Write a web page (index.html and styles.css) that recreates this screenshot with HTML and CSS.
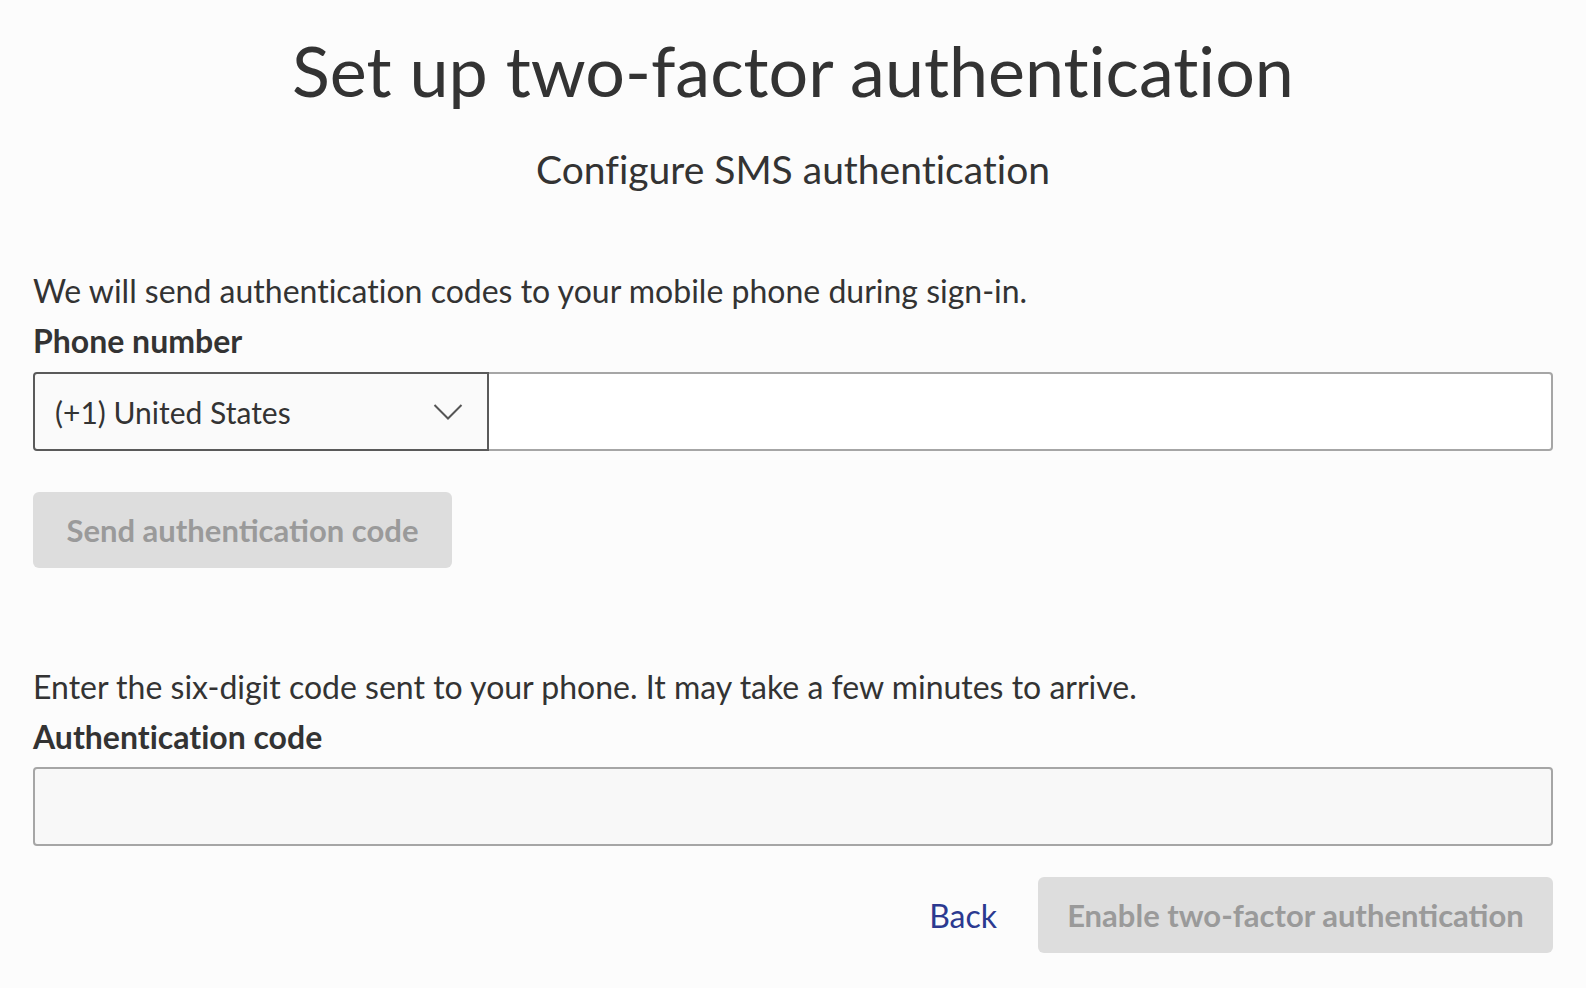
FILE: index.html
```html
<!DOCTYPE html>
<html lang="en">
<head>
<meta charset="utf-8">
<title>Set up two-factor authentication</title>
<link rel="stylesheet" href="styles.css">
</head>
<body>
<main class="page">
  <h1 class="title">Set up two-factor authentication</h1>
  <h2 class="subtitle">Configure SMS authentication</h2>

  <section class="step step-phone">
    <p class="help">We will send authentication codes to your mobile phone during sign-in.</p>
    <label class="label" for="phone">Phone number</label>
    <div class="phone-row">
      <div class="select">
        <span class="select-text">(+1) United States</span>
        <svg class="chevron" width="30" height="18" viewBox="0 0 30 18" aria-hidden="true">
          <path d="M1.5 2 L15 15.5 L28.5 2" fill="none" stroke="#555" stroke-width="2"/>
        </svg>
      </div>
      <input class="phone-input" id="phone" type="tel">
    </div>
    <button class="btn-disabled btn-send" type="button" disabled>Send authentication code</button>
  </section>

  <section class="step step-code">
    <p class="help">Enter the six-digit code sent to your phone. It may take a few minutes to arrive.</p>
    <label class="label" for="code">Authentication code</label>
    <input class="code-input" id="code" type="text">
    <div class="actions">
      <a class="back" href="#">Back</a>
      <button class="btn-disabled btn-enable" type="button" disabled>Enable two-factor authentication</button>
    </div>
  </section>
</main>
</body>
</html>
```

FILE: styles.css
```css
html, body {
  margin: 0;
  padding: 0;
  background: #fcfcfc;
}

body {
  font-family: "Lato", "Noto Sans", sans-serif;
  font-variant-ligatures: none;
  color: #333;
}

.page {
  padding: 35px 33px 0 33px;
}

.title {
  margin: 0;
  font-size: 70px;
  line-height: 70px;
  font-weight: 400;
  text-align: center;
  color: #333;
}

.subtitle {
  margin: 45px 0 0;
  font-size: 39px;
  line-height: 39px;
  font-weight: 400;
  text-align: center;
  color: #333;
}

.step-phone {
  margin-top: 82px;
}

.help {
  margin: 0;
  font-size: 32px;
  line-height: 40px;
}

.label {
  display: block;
  margin-top: 12px;
  font-size: 32px;
  line-height: 36px;
  font-weight: 700;
}

.phone-row {
  display: flex;
  margin-top: 13px;
  height: 79px;
}

.select {
  box-sizing: border-box;
  width: 456px;
  flex: none;
  display: flex;
  align-items: center;
  justify-content: space-between;
  padding: 0 24px 0 20px;
  border: 2px solid #5a5a5a;
  border-radius: 4px 0 0 4px;
  background: #fafafa;
  font-size: 30px;
}

.chevron {
  display: block;
}

.phone-input {
  box-sizing: border-box;
  flex: 1;
  height: 79px;
  margin: 0;
  border: 2px solid #a6a6a6;
  border-left: 0;
  border-radius: 0 4px 4px 0;
  background: #fff;
}

.btn-disabled {
  box-sizing: border-box;
  height: 76px;
  padding: 0;
  border: 0;
  border-radius: 6px;
  background: #dddddd;
  color: #9a9a9a;
  font-family: inherit;
  font-size: 31px;
  font-weight: 700;
}

.btn-send {
  display: block;
  margin-top: 41px;
  width: 419px;
}

.step-code {
  margin-top: 99px;
}

.code-input {
  display: block;
  box-sizing: border-box;
  width: 100%;
  height: 79px;
  margin: 12px 0 0;
  border: 2px solid #a6a6a6;
  border-radius: 4px;
  background: #f8f8f8;
}

.actions {
  display: flex;
  justify-content: flex-end;
  align-items: center;
  gap: 41px;
  margin-top: 31px;
}

.back {
  color: #2b3990;
  text-decoration: none;
  font-size: 32px;
}

.btn-enable {
  width: 515px;
}
```
